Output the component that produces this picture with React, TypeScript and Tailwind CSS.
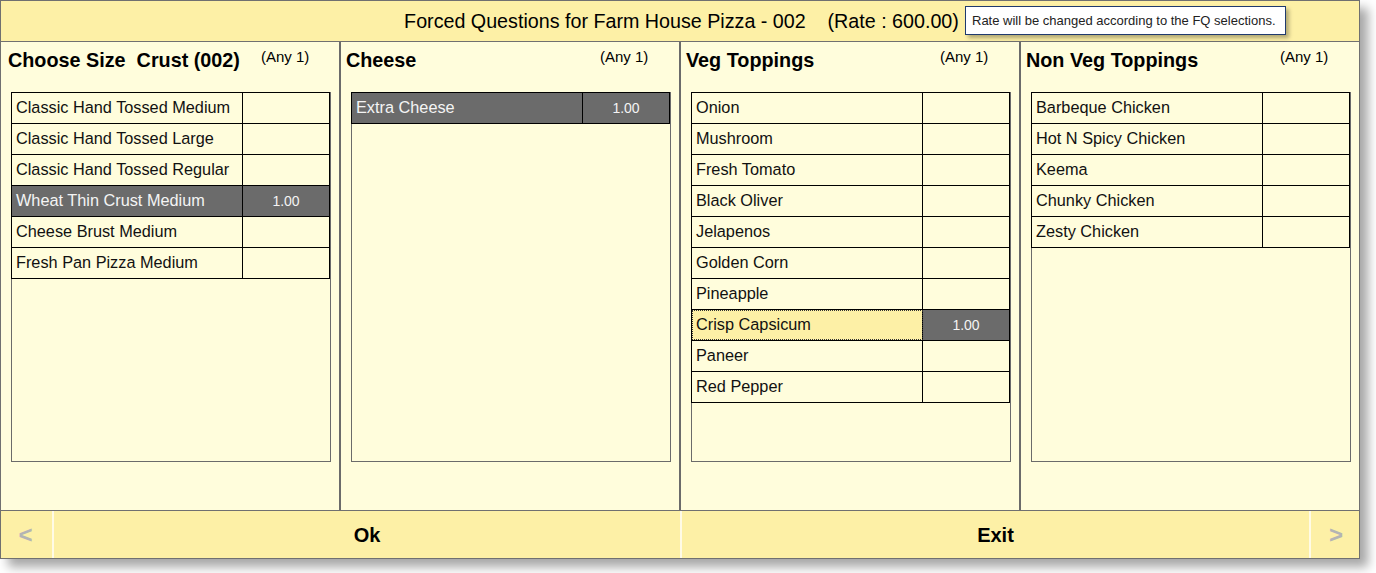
import React from "react";

type Item = { name: string; qty?: string; focus?: boolean };

const cols: { title: string; items: Item[] }[] = [
  {
    title: "Choose Size  Crust (002)",
    items: [
      { name: "Classic Hand Tossed Medium" },
      { name: "Classic Hand Tossed Large" },
      { name: "Classic Hand Tossed Regular" },
      { name: "Wheat Thin Crust Medium", qty: "1.00" },
      { name: "Cheese Brust Medium" },
      { name: "Fresh Pan Pizza Medium" },
    ],
  },
  { title: "Cheese", items: [{ name: "Extra Cheese", qty: "1.00" }] },
  {
    title: "Veg Toppings",
    items: [
      { name: "Onion" },
      { name: "Mushroom" },
      { name: "Fresh Tomato" },
      { name: "Black Oliver" },
      { name: "Jelapenos" },
      { name: "Golden Corn" },
      { name: "Pineapple" },
      { name: "Crisp Capsicum", qty: "1.00", focus: true },
      { name: "Paneer" },
      { name: "Red Pepper" },
    ],
  },
  {
    title: "Non Veg Toppings",
    items: [
      { name: "Barbeque Chicken" },
      { name: "Hot N Spicy Chicken" },
      { name: "Keema" },
      { name: "Chunky Chicken" },
      { name: "Zesty Chicken" },
    ],
  },
];

function Row({ item }: { item: Item }) {
  const sel = !!item.qty;
  const nameCls = item.focus
    ? "bg-[#fdf0a6] text-[#111] outline-1 outline-dotted outline-[#333] -outline-offset-1"
    : sel
    ? "bg-[#6b6b6b] text-[#f4f4f4]"
    : "text-[#111]";
  return (
    <div className="flex h-[31px] border-b border-black">
      <div
        className={`w-[231px] h-full border-r border-black pl-[4px] pb-[2px] flex items-center text-[16.3px] leading-none ${nameCls}`}
      >
        {item.name}
      </div>
      <div
        className={`flex-1 h-full flex items-center justify-center pb-[1px] text-[14px] leading-none ${
          sel ? "bg-[#6b6b6b] text-[#f4f4f4]" : ""
        }`}
      >
        {item.qty ?? ""}
      </div>
    </div>
  );
}

function Column({ title, items, idx }: { title: string; items: Item[]; idx: number }) {
  const wcls =
    idx === 0
      ? "w-[338px]"
      : idx === 3
      ? "flex-1 border-l-2 border-[#6b6b6b]"
      : "w-[340px] border-l-2 border-[#6b6b6b]";
  return (
    <div className={`h-full flex flex-col ${wcls}`}>
      <div className="h-[50px] relative">
        <div
          className={`absolute top-[7px] text-[19.8px] font-bold text-black leading-[22px] whitespace-pre ${
            idx === 0 ? "left-[7px]" : "left-[5px]"
          }`}
        >
          {title}
        </div>
        <div className={`absolute top-[6px] text-[15px] text-black leading-[17px] ${idx === 0 ? "left-[260px]" : "left-[259px]"}`}>
          (Any 1)
        </div>
      </div>
      <div className="ml-[10px] w-[320px] h-[370px] border border-[#6b6b6b]">
        <div className="w-[319px] border-t border-r border-l border-black -mt-px -ml-px">
          {items.map((it) => (
            <Row key={it.name} item={it} />
          ))}
        </div>
      </div>
    </div>
  );
}

export default function App() {
  return (
    <div
      className="w-[1376px] h-[573px] bg-white relative"
      style={{ fontFamily: '"Liberation Sans", Arial, sans-serif' }}
    >
      <div className="w-[1360px] h-[559px] border border-[#707070] bg-[#fffddc] flex flex-col shadow-[8px_8px_10px_rgba(0,0,0,0.35)]">
        <div className="h-[41px] bg-[#fdf0a6] border-b border-[#707070] flex items-center justify-center relative">
          <span className="text-[19.7px] text-black whitespace-pre pt-[1px] ml-[3px]">
            {"Forced Questions for Farm House Pizza - 002    (Rate : 600.00)"}
          </span>
          <div className="absolute left-[964px] top-[5px] w-[321px] h-[29px] bg-white border border-[#1f3a6e] flex items-center pl-[6px] text-[13px] text-[#222] shadow-[3px_3px_4px_rgba(0,0,0,0.3)]">
            Rate will be changed according to the FQ selections.
          </div>
        </div>
        <div className="h-[468px] flex">
          {cols.map((c, i) => (
            <Column key={c.title} title={c.title} items={c.items} idx={i} />
          ))}
        </div>
        <div className="flex-1 bg-[#fdf0a6] border-t border-[#707070] flex">
          <div className="w-[51px] flex items-center justify-center pt-[1px] pr-[2px] text-[24px] font-bold text-[#b4b4b4]">&lt;</div>
          <div className="w-[2px] bg-[#fffbe6]" />
          <div className="w-[626px] flex items-center justify-center pt-[1px] text-[20px] font-bold text-black">Ok</div>
          <div className="w-[2px] bg-[#fffbe6]" />
          <div className="w-[627px] flex items-center justify-center pt-[1px] text-[20px] font-bold text-black">Exit</div>
          <div className="w-[2px] bg-[#fffbe6]" />
          <div className="flex-1 flex items-center justify-center pt-[1px] pl-[2px] text-[24px] font-bold text-[#b4b4b4]">&gt;</div>
        </div>
      </div>
    </div>
  );
}
